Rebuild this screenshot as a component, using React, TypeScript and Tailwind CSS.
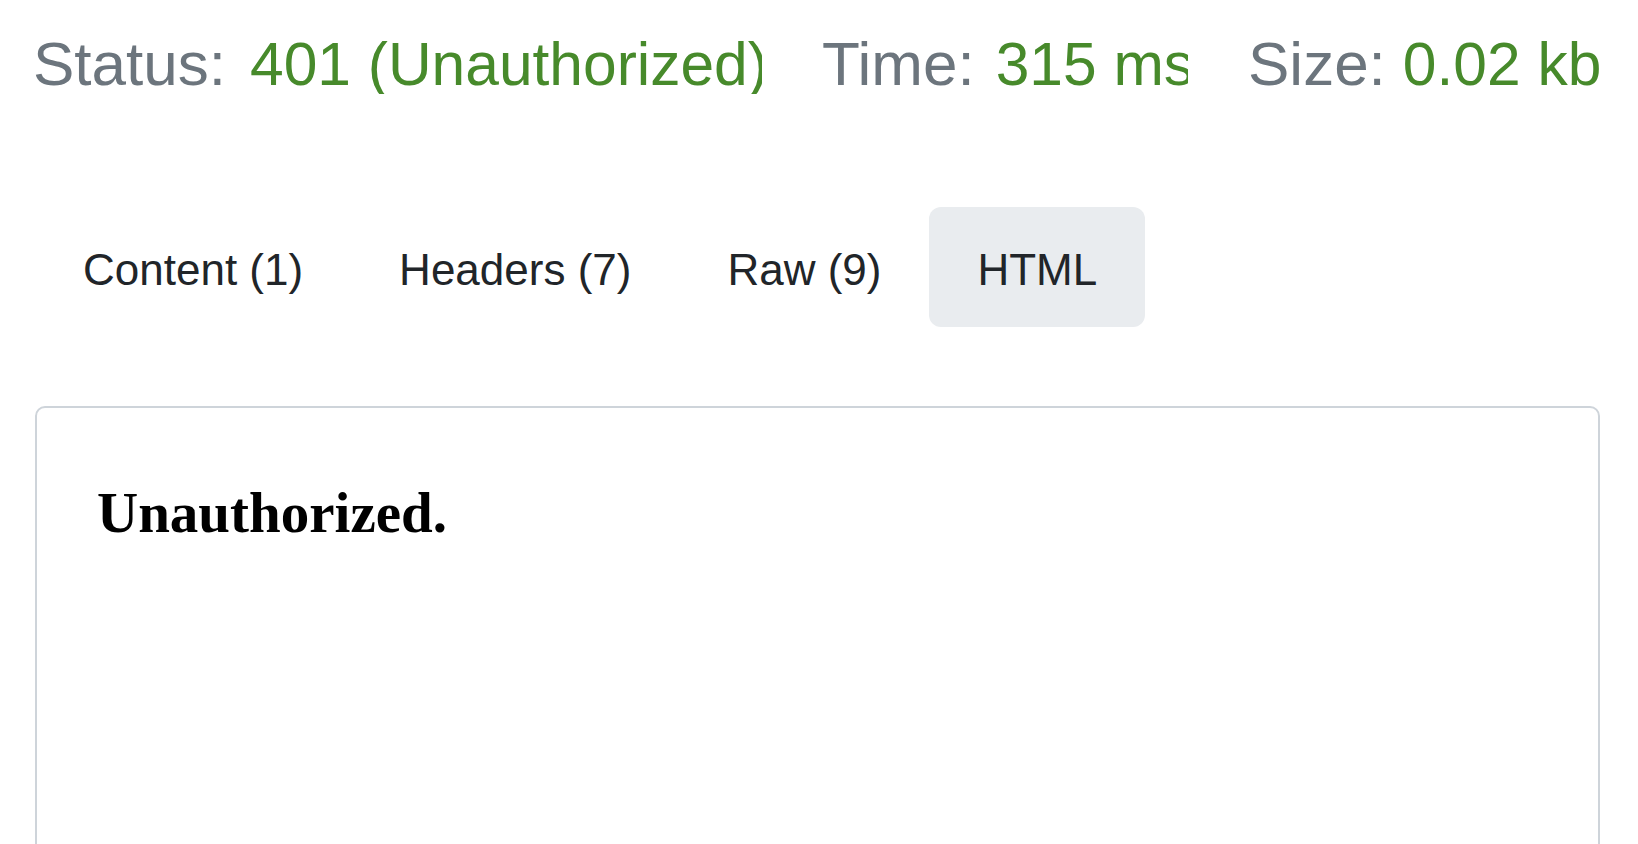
import React, { useState } from 'react';

const stats = [
  { label: 'Status:', value: '401 (Unauthorized)', width: 'w-[729px]', gap: 'gap-[24px]' },
  { label: 'Time:', value: '315 ms', width: 'w-[366px]', gap: 'gap-[21px]' },
  { label: 'Size:', value: '0.02 kb', width: 'w-[353px]', gap: 'gap-[17px]' },
];

const tabs = ['Content (1)', 'Headers (7)', 'Raw (9)', 'HTML'];

export default function App() {
  const [active, setActive] = useState('HTML');

  return (
    <div className="h-screen overflow-hidden bg-white font-['Liberation_Sans',Arial,sans-serif]">
      <div className="flex gap-[60px] pl-[33px] pt-[34px] leading-[60px]">
        {stats.map((s) => (
          <div key={s.label} className={`flex shrink-0 items-baseline overflow-hidden whitespace-nowrap ${s.gap} ${s.width}`}>
            <span className="text-[62px] text-[#6c757d]">{s.label}</span>
            <span className="text-[60.5px] text-[#478a2b]">{s.value}</span>
          </div>
        ))}
      </div>

      <div className="mt-[113px] flex px-[35px]">
        {tabs.map((t) => (
          <button
            key={t}
            onClick={() => setActive(t)}
            className={`flex h-[120px] items-center rounded-xl px-12 pt-[5px] text-[44px] leading-none text-[#212529] ${
              active === t ? 'bg-[#e9ecef]' : ''
            }`}
          >
            {t}
          </button>
        ))}
      </div>

      <div className="ml-[35px] mr-[38px] mt-[79px] h-[520px] rounded-[10px] border-2 border-[#ced4da] pl-[60px] pt-[71px]">
        <h1 className="font-['Liberation_Serif','Times_New_Roman',serif] text-[57px] font-bold leading-[1.2] text-black">
          Unauthorized.
        </h1>
      </div>
    </div>
  );
}
